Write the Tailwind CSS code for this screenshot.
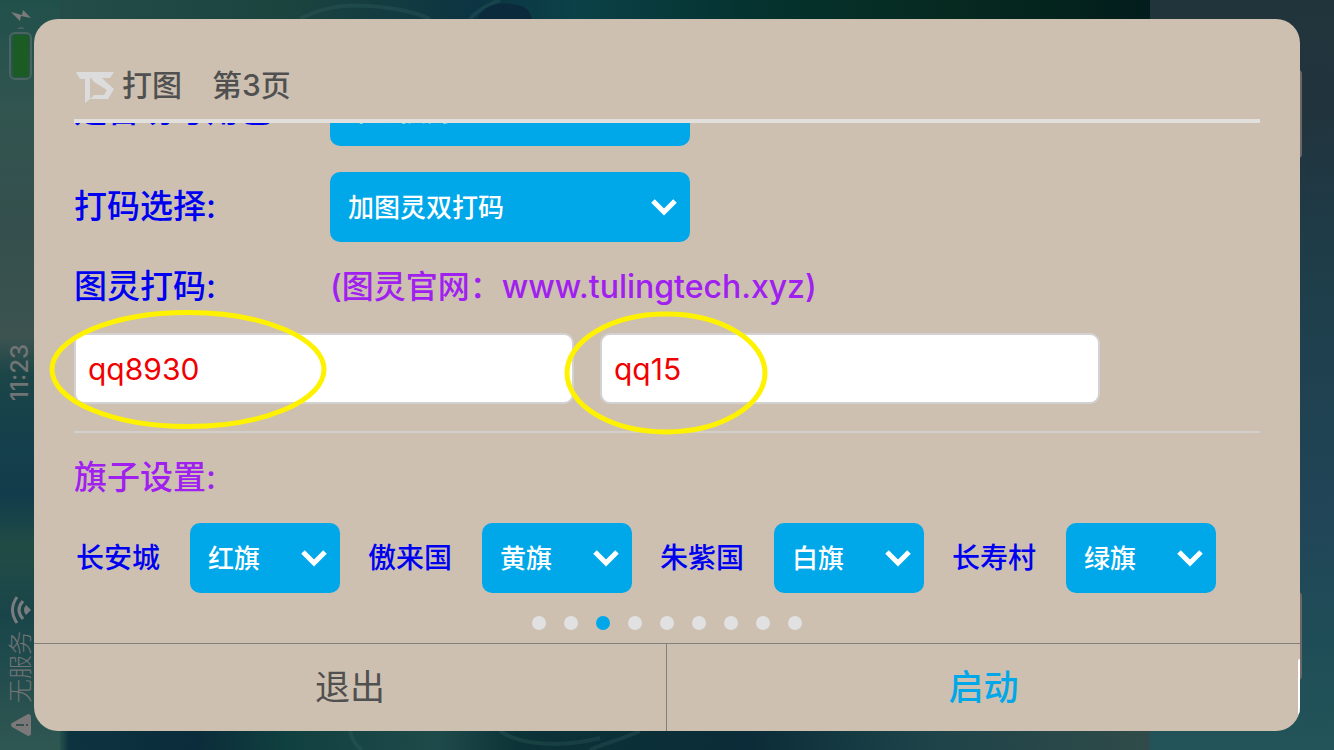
<!DOCTYPE html>
<html lang="zh-CN">

<head>
  <meta charset="UTF-8">
  <meta name="viewport" content="width=device-width, initial-scale=1">
  <script src="https://cdn.jsdelivr.net/npm/@tailwindcss/browser@4"></script>
  <title>打图</title>
</head>

<body class="font-[Inter,'Noto_Sans_CJK_SC',sans-serif]">
  <div class="relative flex h-screen overflow-hidden bg-[#12383c]">

    <!-- wallpaper -->
    <svg class="absolute inset-0 w-full h-full" viewBox="0 0 1334 750" preserveAspectRatio="none" aria-hidden="true">
      <defs>
        <linearGradient id="top" x1="0" x2="1">
          <stop offset="0" stop-color="#264f4b" />
          <stop offset=".25" stop-color="#1b443f" />
          <stop offset=".41" stop-color="#0c3442" />
          <stop offset=".5" stop-color="#0b4148" />
          <stop offset=".65" stop-color="#05332f" />
          <stop offset=".82" stop-color="#062a20" />
          <stop offset="1" stop-color="#021d1c" />
        </linearGradient>
        <linearGradient id="bottom" x1="0" x2="1">
          <stop offset="0" stop-color="#2c5550" />
          <stop offset=".05" stop-color="#2c5a50" />
          <stop offset=".06" stop-color="#0e3340" />
          <stop offset=".17" stop-color="#0b2c3a" />
          <stop offset=".25" stop-color="#10403f" />
          <stop offset=".38" stop-color="#1f4a4a" />
          <stop offset=".45" stop-color="#0c3337" />
          <stop offset=".65" stop-color="#0b2c38" />
          <stop offset=".8" stop-color="#1d4349" />
          <stop offset="1" stop-color="#304b49" />
        </linearGradient>
        <linearGradient id="left" x1="0" x2="0" y1="0" y2="1">
          <stop offset="0" stop-color="#21504b" />
          <stop offset=".15" stop-color="#325550" />
          <stop offset=".3" stop-color="#344f4d" />
          <stop offset=".45" stop-color="#3c5350" />
          <stop offset=".5" stop-color="#1b4547" />
          <stop offset=".6" stop-color="#143f4c" />
          <stop offset=".66" stop-color="#123c4b" />
          <stop offset=".73" stop-color="#214c45" />
          <stop offset=".82" stop-color="#19454a" />
          <stop offset="1" stop-color="#2f5752" />
        </linearGradient>
        <linearGradient id="right" x1="0" x2="0" y1="0" y2="1">
          <stop offset="0" stop-color="#22343b" />
          <stop offset=".15" stop-color="#21343e" />
          <stop offset=".35" stop-color="#1e3d49" />
          <stop offset=".7" stop-color="#214658" />
          <stop offset=".85" stop-color="#1f4d57" />
          <stop offset="1" stop-color="#235459" />
        </linearGradient>
      </defs>
      <rect width="1150" height="375" fill="url(#top)" />
      <rect y="375" width="1150" height="375" fill="url(#bottom)" />
      <rect width="60" height="750" fill="url(#left)" />
      <rect x="1150" width="184" height="750" fill="url(#right)" />
      <g fill="none" stroke="#3b6a66" stroke-opacity=".25" stroke-width="4">
        <path d="M300 19C320 8 345 4 370 6S415 12 430 19M470 19C476 12 484 6 500 0" />
        <path d="M500 731C520 745 560 748 600 738M640 731C620 740 600 745 590 750M350 731C352 740 355 745 362 750" />
      </g>
      <path d="M478 19C482 6 496 2 512 4S530 12 532 19Z" fill="#0b2b3d" />
    </svg>

    <!-- status bar, phone held sideways -->
    <aside class="relative w-[34px] shrink-0 flex flex-col items-center justify-between pt-2 pb-3.5 pl-2 text-[#717474]">
      <div class="flex flex-col items-center">
        <svg class="w-5 h-4" viewBox="0 0 20 16" fill="#7b7b7b"><path d="M0 4 11 7 12 2 20 10 10 8 9 13Z" /></svg>
        <svg class="w-6 h-14" viewBox="0 0 24 56" fill="none">
          <path d="M8 5q4-4 8 0z" fill="#52615f" />
          <rect x="1" y="9" width="21" height="46" rx="5" stroke="#4a6561" stroke-width="2" />
          <rect x="4" y="11" width="16" height="42" rx="2" fill="#1b5c25" />
        </svg>
      </div>
      <span class="absolute top-[340px] left-2 h-16 [writing-mode:vertical-rl] rotate-180 text-2xl leading-6 text-center font-medium">11:23</span>
      <div class="flex flex-col items-center gap-[7px]">
        <svg class="w-5 h-7" viewBox="0 0 20 28" fill="none" stroke="#7a7d7d" stroke-width="3">
          <path d="M6 1Q-3 14 6 27M12 5Q4 14 12 23" />
          <path d="M20 14 15 9Q11 14 15 19Z" fill="#7a7d7d" stroke="none" />
        </svg>
        <span class="[writing-mode:vertical-rl] [text-orientation:sideways] rotate-180 text-2xl leading-6 font-light pt-1">无服务</span>
        <svg class="w-5 h-[22px]" viewBox="0 0 20 22">
          <path d="M1 9 17 0Q20 0 20 3V19Q20 22 17 22L1 13Q-1 11 1 9Z" fill="#7a7878" />
          <path d="M5 11H13M15 11H17" stroke="#36504f" stroke-width="2" />
        </svg>
      </div>
    </aside>

    <main class="relative flex-1 min-w-0 py-[19px]">
      <!-- edges of the windows behind the dialog -->
      <div class="absolute top-[70px] -right-0.5 w-2 h-[88px] rounded-r bg-[#6a6766]"></div>
      <div class="absolute bottom-[70px] -right-0.5 w-2 h-[88px] rounded-r bg-[#6a6766]"></div>
      <form class="relative h-full flex flex-col overflow-hidden rounded-3xl bg-[#cdc0b0]">

        <header class="mx-10 h-[104px] shrink-0 flex items-center gap-1.5 pt-8 border-b-4 border-[#e2e0dc]">
          <svg class="w-[42px] h-8 mt-1" viewBox="0 0 42 32" fill="#dcdcdc" role="img" aria-label="TS">
            <path d="M2 1H40L36 7H28L32 11 40 18 34 28H16L20 24H30L33 19 20 11 17 7H16V28L11 32V8H6Z" />
          </svg>
          <h1 class="text-3xl font-medium text-[#505050]">打图　第3页</h1>
        </header>

        <section class="px-10 flex-1 min-h-0 flex flex-col justify-end overflow-hidden">
          <div class="flex items-center h-[70px] mb-[26px] shrink-0">
            <label for="role" class="w-64 text-[33px] font-medium text-[#0000f0]">是否切号角色:</label>
            <div class="relative w-[360px]">
              <select id="role" class="appearance-none w-full h-[70px] rounded-[10px] bg-[#00a8ea] pl-[18px] text-[26px] font-medium text-white">
                <option>不切换角色</option>
              </select>
            </div>
          </div>
          <div class="flex items-center h-[70px] mb-5 shrink-0">
            <label for="code" class="w-64 text-[33px] font-medium text-[#0000f0]">打码选择:</label>
            <div class="relative w-[360px]">
              <select id="code" class="appearance-none w-full h-[70px] rounded-[10px] bg-[#00a8ea] pl-[18px] text-[26px] font-medium text-white">
                <option>加图灵双打码</option>
              </select>
              <svg class="absolute right-3 top-[26px] w-7 h-[18px] pointer-events-none" viewBox="0 0 28 18" fill="none" stroke="#fff" stroke-width="5"><path d="M3 3 14 14 25 3" /></svg>
            </div>
          </div>
          <div class="flex items-center h-[50px] mb-[21px] shrink-0 font-medium">
            <label for="user" class="w-64 text-[33px] text-[#0000f0]">图灵打码:</label>
            <p class="text-[32px] text-[#a020f0]">(图灵官网：www.tulingtech.xyz)</p>
          </div>
          <div class="flex gap-[26px] mb-[27px] shrink-0">
            <div class="relative w-[500px]">
              <input id="user" type="text" value="qq8930" class="block w-full h-[71px] rounded-[10px] border-2 border-[#d2d2d2] bg-white px-3 text-3xl text-[#f00000]">
              <svg class="absolute -top-[23px] -left-[25px] w-[278px] h-[119px] pointer-events-none" viewBox="0 0 278 119" fill="none"><ellipse cx="139" cy="59.500" rx="136" ry="57" stroke="#fff200" stroke-width="5" /></svg>
            </div>
            <div class="relative w-[500px]">
              <input type="text" value="qq15" aria-label="图灵密码" class="block w-full h-[71px] rounded-[10px] border-2 border-[#d2d2d2] bg-white px-3 text-3xl text-[#f00000]">
              <svg class="absolute -top-[22px] -left-9 w-[204px] h-[124px] pointer-events-none" viewBox="0 0 204 124" fill="none"><ellipse cx="102" cy="62" rx="99" ry="59" stroke="#fff200" stroke-width="5" /></svg>
            </div>
          </div>
          <hr class="border-t-2 border-[#d2d0cc] mb-5 shrink-0">
          <h2 class="flex items-center h-[50px] mb-5 shrink-0 text-[33px] font-medium text-[#a020f0]">旗子设置:</h2>
          <div class="flex gap-7 shrink-0 text-[28px] font-medium text-[#0000f0]">
            <div class="flex items-center">
              <label for="f1" class="w-[116px] pl-0.5">长安城</label>
              <div class="relative w-[150px]">
                <select id="f1" class="appearance-none w-full h-[70px] rounded-[10px] bg-[#00a8ea] pl-[18px] text-[26px] text-white">
                  <option>红旗</option>
                </select>
                <svg class="absolute right-3 top-[26px] w-7 h-[18px] pointer-events-none" viewBox="0 0 28 18" fill="none" stroke="#fff" stroke-width="5"><path d="M3 3 14 14 25 3" /></svg>
              </div>
            </div>
            <div class="flex items-center">
              <label for="f2" class="w-[114px]">傲来国</label>
              <div class="relative w-[150px]">
                <select id="f2" class="appearance-none w-full h-[70px] rounded-[10px] bg-[#00a8ea] pl-[18px] text-[26px] text-white">
                  <option>黄旗</option>
                </select>
                <svg class="absolute right-3 top-[26px] w-7 h-[18px] pointer-events-none" viewBox="0 0 28 18" fill="none" stroke="#fff" stroke-width="5"><path d="M3 3 14 14 25 3" /></svg>
              </div>
            </div>
            <div class="flex items-center">
              <label for="f3" class="w-[114px]">朱紫国</label>
              <div class="relative w-[150px]">
                <select id="f3" class="appearance-none w-full h-[70px] rounded-[10px] bg-[#00a8ea] pl-[18px] text-[26px] text-white">
                  <option>白旗</option>
                </select>
                <svg class="absolute right-3 top-[26px] w-7 h-[18px] pointer-events-none" viewBox="0 0 28 18" fill="none" stroke="#fff" stroke-width="5"><path d="M3 3 14 14 25 3" /></svg>
              </div>
            </div>
            <div class="flex items-center">
              <label for="f4" class="w-[114px]">长寿村</label>
              <div class="relative w-[150px]">
                <select id="f4" class="appearance-none w-full h-[70px] rounded-[10px] bg-[#00a8ea] pl-[18px] text-[26px] text-white">
                  <option>绿旗</option>
                </select>
                <svg class="absolute right-3 top-[26px] w-7 h-[18px] pointer-events-none" viewBox="0 0 28 18" fill="none" stroke="#fff" stroke-width="5"><path d="M3 3 14 14 25 3" /></svg>
              </div>
            </div>
          </div>
        </section>

        <nav class="h-[50px] shrink-0 flex items-center justify-center gap-[18px] pt-2.5" aria-label="页">
          <i class="w-3.5 h-3.5 rounded-full bg-[#e1e1e1]"></i>
          <i class="w-3.5 h-3.5 rounded-full bg-[#e1e1e1]"></i>
          <i class="w-3.5 h-3.5 rounded-full bg-[#00a8ea]"></i>
          <i class="w-3.5 h-3.5 rounded-full bg-[#e1e1e1]"></i>
          <i class="w-3.5 h-3.5 rounded-full bg-[#e1e1e1]"></i>
          <i class="w-3.5 h-3.5 rounded-full bg-[#e1e1e1]"></i>
          <i class="w-3.5 h-3.5 rounded-full bg-[#e1e1e1]"></i>
          <i class="w-3.5 h-3.5 rounded-full bg-[#e1e1e1]"></i>
          <i class="w-3.5 h-3.5 rounded-full bg-[#e1e1e1]"></i>
        </nav>

        <footer class="h-[88px] shrink-0 grid grid-cols-2 border-t border-[#808080] text-[35px]">
          <button type="button" class="border-r border-[#808080] text-[#505050]">退出</button>
          <button type="submit" class="font-medium text-[#00a8ea]">启动</button>
        </footer>
        <div class="absolute right-0 bottom-4 w-0.5 h-14 rounded-l bg-white"></div>
      </form>
    </main>

    <div class="w-[34px] shrink-0"></div>
  </div>
</body>

</html>
